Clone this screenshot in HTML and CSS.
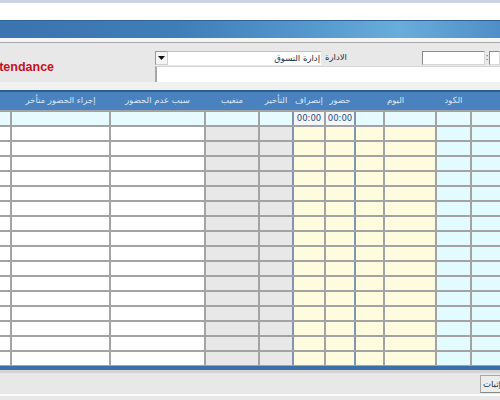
FILE: index.html
```html
<!DOCTYPE html>
<html lang="ar">
<head>
<meta charset="utf-8">
<title>Attendance</title>
<link rel="stylesheet" href="styles.css">
</head>
<body>
<div class="app">
  <div class="topline"></div>
  <div class="whitebar"></div>
  <div class="bluebar"></div>
  <div class="gapline"></div>
  <div class="form">
    <div class="title"><span class="title-text">Attendance</span></div>
    <div class="fields">
      <div class="row1">
        <div class="combo">
          <span class="dd"><svg width="7" height="4" viewBox="0 0 7 4"><path d="M0 0h7L3.5 4z" fill="#111"/></svg></span>
          <span class="ctext">إدارة التسوق</span>
        </div>
        <div class="lbl">الادارة</div>
        <div class="inp inp1"></div>
        <div class="colon">:</div>
        <div class="inp inp2"></div>
      </div>
      <div class="row2"></div>
    </div>
  </div>
  <div class="table">
    <div class="hdr">
      <div class="h c0"></div>
      <div class="h c1">إجراء الحضور متأخر</div>
      <div class="h c2">سبب عدم الحضور</div>
      <div class="h c3">متغيب</div>
      <div class="h c4">التأخير</div>
      <div class="h c5">إنصراف</div>
      <div class="h c6">حضور</div>
      <div class="h c78">اليوم</div>
      <div class="h c9">الكود</div>
      <div class="h c10"></div>
    </div>
    <div class="row first">
      <div class="cell"></div><div class="cell"></div><div class="cell"></div><div class="cell"></div><div class="cell"></div>
      <div class="cell time bl">00:00</div><div class="cell time">00:00</div>
      <div class="cell bl"></div><div class="cell"></div><div class="cell"></div><div class="cell"></div>
    </div>
    <div class="row"><div class="cell w"></div><div class="cell w"></div><div class="cell w"></div><div class="cell g"></div><div class="cell g"></div><div class="cell y bl"></div><div class="cell y"></div><div class="cell y bl"></div><div class="cell y"></div><div class="cell c"></div><div class="cell c"></div></div>
    <div class="row"><div class="cell w"></div><div class="cell w"></div><div class="cell w"></div><div class="cell g"></div><div class="cell g"></div><div class="cell y bl"></div><div class="cell y"></div><div class="cell y bl"></div><div class="cell y"></div><div class="cell c"></div><div class="cell c"></div></div>
    <div class="row"><div class="cell w"></div><div class="cell w"></div><div class="cell w"></div><div class="cell g"></div><div class="cell g"></div><div class="cell y bl"></div><div class="cell y"></div><div class="cell y bl"></div><div class="cell y"></div><div class="cell c"></div><div class="cell c"></div></div>
    <div class="row"><div class="cell w"></div><div class="cell w"></div><div class="cell w"></div><div class="cell g"></div><div class="cell g"></div><div class="cell y bl"></div><div class="cell y"></div><div class="cell y bl"></div><div class="cell y"></div><div class="cell c"></div><div class="cell c"></div></div>
    <div class="row"><div class="cell w"></div><div class="cell w"></div><div class="cell w"></div><div class="cell g"></div><div class="cell g"></div><div class="cell y bl"></div><div class="cell y"></div><div class="cell y bl"></div><div class="cell y"></div><div class="cell c"></div><div class="cell c"></div></div>
    <div class="row"><div class="cell w"></div><div class="cell w"></div><div class="cell w"></div><div class="cell g"></div><div class="cell g"></div><div class="cell y bl"></div><div class="cell y"></div><div class="cell y bl"></div><div class="cell y"></div><div class="cell c"></div><div class="cell c"></div></div>
    <div class="row"><div class="cell w"></div><div class="cell w"></div><div class="cell w"></div><div class="cell g"></div><div class="cell g"></div><div class="cell y bl"></div><div class="cell y"></div><div class="cell y bl"></div><div class="cell y"></div><div class="cell c"></div><div class="cell c"></div></div>
    <div class="row"><div class="cell w"></div><div class="cell w"></div><div class="cell w"></div><div class="cell g"></div><div class="cell g"></div><div class="cell y bl"></div><div class="cell y"></div><div class="cell y bl"></div><div class="cell y"></div><div class="cell c"></div><div class="cell c"></div></div>
    <div class="row"><div class="cell w"></div><div class="cell w"></div><div class="cell w"></div><div class="cell g"></div><div class="cell g"></div><div class="cell y bl"></div><div class="cell y"></div><div class="cell y bl"></div><div class="cell y"></div><div class="cell c"></div><div class="cell c"></div></div>
    <div class="row"><div class="cell w"></div><div class="cell w"></div><div class="cell w"></div><div class="cell g"></div><div class="cell g"></div><div class="cell y bl"></div><div class="cell y"></div><div class="cell y bl"></div><div class="cell y"></div><div class="cell c"></div><div class="cell c"></div></div>
    <div class="row"><div class="cell w"></div><div class="cell w"></div><div class="cell w"></div><div class="cell g"></div><div class="cell g"></div><div class="cell y bl"></div><div class="cell y"></div><div class="cell y bl"></div><div class="cell y"></div><div class="cell c"></div><div class="cell c"></div></div>
    <div class="row"><div class="cell w"></div><div class="cell w"></div><div class="cell w"></div><div class="cell g"></div><div class="cell g"></div><div class="cell y bl"></div><div class="cell y"></div><div class="cell y bl"></div><div class="cell y"></div><div class="cell c"></div><div class="cell c"></div></div>
    <div class="row"><div class="cell w"></div><div class="cell w"></div><div class="cell w"></div><div class="cell g"></div><div class="cell g"></div><div class="cell y bl"></div><div class="cell y"></div><div class="cell y bl"></div><div class="cell y"></div><div class="cell c"></div><div class="cell c"></div></div>
    <div class="row"><div class="cell w"></div><div class="cell w"></div><div class="cell w"></div><div class="cell g"></div><div class="cell g"></div><div class="cell y bl"></div><div class="cell y"></div><div class="cell y bl"></div><div class="cell y"></div><div class="cell c"></div><div class="cell c"></div></div>
    <div class="row"><div class="cell w"></div><div class="cell w"></div><div class="cell w"></div><div class="cell g"></div><div class="cell g"></div><div class="cell y bl"></div><div class="cell y"></div><div class="cell y bl"></div><div class="cell y"></div><div class="cell c"></div><div class="cell c"></div></div>
    <div class="row"><div class="cell w"></div><div class="cell w"></div><div class="cell w"></div><div class="cell g"></div><div class="cell g"></div><div class="cell y bl"></div><div class="cell y"></div><div class="cell y bl"></div><div class="cell y"></div><div class="cell c"></div><div class="cell c"></div></div>
  </div>
  <div class="bottombar"></div>
  <div class="footer">
    <div class="footer-main"><button class="btn">إثبات</button></div>
    <div class="footer-line"></div>
  </div>
</div>
</body>
</html>
```

FILE: styles.css
```css
html, body {
  margin: 0;
  padding: 0;
  width: 500px;
  height: 400px;
  overflow: hidden;
  background: #e9e9e9;
  font-family: "DejaVu Sans", "Noto Sans", sans-serif;
}
.app {
  width: 500px;
  height: 400px;
  display: flex;
  flex-direction: column;
  overflow: hidden;
}
.topline {
  height: 3px;
  background: #c9d5e2;
  flex: none;
}
.whitebar {
  height: 17px;
  background: #ffffff;
  flex: none;
}
.bluebar {
  height: 18px;
  flex: none;
  border-top: 1px solid #2f6399;
  box-sizing: border-box;
  background: linear-gradient(to right, #3b74b0 0%, #3f7db9 35%, #5598cd 62%, #69addb 80%, #4f8ec7 100%);
}
.gapline {
  height: 4px;
  flex: none;
  background: #f4f4f4;
}
.form {
  flex: none;
  height: 48px;
  box-sizing: border-box;
  border-top: 1px solid #a9a9a9;
  background: linear-gradient(to bottom, #e8e8e8 0, #e8e8e8 39px, #f1f1f1 39px);
  display: flex;
  padding-top: 8px;
}
.title {
  width: 155px;
  flex: none;
  overflow: hidden;
  display: flex;
  align-items: center;
  height: 31px;
}
.title-text {
  margin-left: -14px;
  color: #c4121f;
  font-family: "Liberation Sans", Arial, sans-serif;
  font-weight: bold;
  font-size: 12.5px;
  white-space: nowrap;
}
.fields {
  flex: 1;
  display: flex;
  flex-direction: column;
}
.row1 {
  height: 15px;
  display: flex;
}
.combo {
  width: 166px;
  display: flex;
  height: 14px;
}
.dd {
  width: 13px;
  height: 14px;
  box-sizing: border-box;
  background: #f4f4f4;
  border: 1px solid #9a9a9a;
  border-right-color: #cfcfcf;
  border-bottom-color: #cfcfcf;
  display: flex;
  align-items: center;
  justify-content: center;
}
.ctext {
  flex: 1;
  background: #fff;
  height: 14px;
  box-sizing: border-box;
  border-top: 1px solid #c0c0c0;
  font-size: 8.5px;
  line-height: 12px;
  color: #203040;
  text-align: right;
  direction: rtl;
  padding-right: 1px;
  white-space: nowrap;
}
.lbl {
  width: 101px;
  font-size: 8.5px;
  line-height: 13px;
  color: #203040;
  padding-left: 4px;
  box-sizing: border-box;
  direction: rtl;
  text-align: left;
}
.inp {
  height: 14px;
  background: #fff;
  box-sizing: border-box;
  border: 1px solid #8c8c8c;
  border-right-color: #d8d8d8;
  border-bottom-color: #d8d8d8;
}
.inp1 {
  width: 63px;
}
.colon {
  width: 4px;
  font-size: 9px;
  line-height: 13px;
  color: #555;
  text-align: center;
}
.inp2 {
  flex: 1;
}
.row2 {
  height: 16px;
  background: #fff;
  box-sizing: border-box;
  border-left: 2px solid #a8a8a8;
  border-top: 1px solid #d6d6d6;
}

/* table */
.table {
  flex: none;
  background: #a3a3a3;
  display: flex;
  flex-direction: column;
  gap: 2px;
  padding-bottom: 1px;
}
.hdr, .row {
  display: grid;
  grid-template-columns: 10px 97px 93px 52px 32px 30px 28px 27px 50px 33px 28px;
}
.hdr {
  height: 20px;
  box-sizing: border-box;
  border-top: 2px solid #2c5d93;
  background: #4a82bf;
  column-gap: 2px;
}
.row {
  height: 13px;
  column-gap: 2px;
}
.h {
  color: #dbe7f5;
  font-size: 8.5px;
  line-height: 17px;
  text-align: center;
  white-space: nowrap;
  direction: rtl;
}
.c78 {
  grid-column: span 2;
}
.cell {
  background: #fff;
  position: relative;
}
.first .cell {
  background: #e5fbff;
}
.first .time {
  background: #f3f7fa;
  color: #2b4d86;
  font-size: 8.5px;
  line-height: 13px;
  text-align: center;
}
.cell.w { background: #ffffff; }
.cell.g { background: #e8e8e8; }
.cell.y { background: #fffbdf; }
.cell.c { background: #e2fbff; }
.cell.bl {
  box-shadow: -2px 0 0 #8194b3;
}

.bottombar {
  flex: none;
  height: 4px;
  background: #3b6fa7;
}
.footer {
  flex: 1;
  display: flex;
  flex-direction: column;
  background: #e8e8e8;
  border-top: 3px solid #d3d3d3;
}
.footer-main {
  height: 19px;
  padding-top: 2px;
  display: flex;
  justify-content: flex-end;
}
.btn {
  width: 20px;
  height: 18px;
  padding: 0 0 0 2px;
  margin: 0;
  font-family: "DejaVu Sans", sans-serif;
  font-size: 8.5px;
  color: #203040;
  background: #ececec;
  border: 1px solid #a8a8a8;
  border-right: none;
  border-bottom-color: #888;
  overflow: hidden;
  white-space: nowrap;
  text-align: left;
  direction: ltr;
}
.footer-line {
  height: 2px;
  background: #fbfbfb;
}
```
